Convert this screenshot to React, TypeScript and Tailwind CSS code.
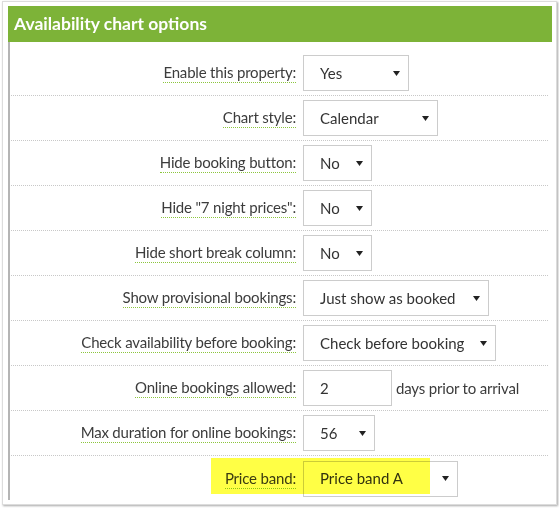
import React from "react";

type Row = {
  label: string;
  kind: "select" | "input";
  value: string;
  width: number;
  suffix?: string;
};

const rows: Row[] = [
  { label: "Enable this property:", kind: "select", value: "Yes", width: 106 },
  { label: "Chart style:", kind: "select", value: "Calendar", width: 135 },
  { label: "Hide booking button:", kind: "select", value: "No", width: 69 },
  { label: 'Hide "7 night prices":', kind: "select", value: "No", width: 69 },
  { label: "Hide short break column:", kind: "select", value: "No", width: 69 },
  { label: "Show provisional bookings:", kind: "select", value: "Just show as booked", width: 186 },
  { label: "Check availability before booking:", kind: "select", value: "Check before booking", width: 193 },
  { label: "Online bookings allowed:", kind: "input", value: "2", width: 89, suffix: "days prior to arrival" },
  { label: "Max duration for online bookings:", kind: "select", value: "56", width: 72 },
  { label: "Price band:", kind: "select", value: "Price band A", width: 155 },
];

function Arrow() {
  return (
    <svg width="7" height="5" viewBox="0 0 7 5" className="shrink-0">
      <path d="M0 0 H7 L3.5 5 Z" fill="#222" />
    </svg>
  );
}

export default function App() {
  const font = { fontFamily: "Lato, 'Open Sans', sans-serif" };
  return (
    <div className="w-[559px] h-[508px] bg-white overflow-hidden" style={font}>
      <div className="ml-[2px] mt-[1px] w-[555px] h-[504px] border border-[#dcdcdc] shadow-[1px_1px_2px_rgba(0,0,0,0.35)] pl-[5px] pt-[4px] bg-white">
        <div className="w-[544px]">
          <div className="h-[36px] bg-[#7db338] flex items-center pl-[6px]">
            <span className="text-white font-bold text-[17.5px]">Availability chart options</span>
          </div>
          <div className="relative border-l-2 border-[#b4b4b4] pt-[9px] h-[458px]">
            {rows.map((r, i) => (
              <div
                key={i}
                className={
                  "flex items-center h-[45px] ml-[1px] mr-[4px] " +
                  (i < rows.length - 1 ? "border-b border-dotted border-[#c8c8c8]" : "")
                }
              >
                <div className="w-[292px] flex justify-end pr-[7px]">
                  <span className="text-[15px] tracking-[-0.18px] text-[#3c3c3c] leading-[19px] border-b border-dotted border-[#8cc63e]">
                    {r.label}
                  </span>
                </div>
                {r.kind === "select" ? (
                  <div
                    className="h-[36px] border border-[#cccccc] bg-white flex items-center justify-between pl-[16px] pr-[8px]"
                    style={{ width: r.width }}
                  >
                    <span className="text-[15px] text-[#333]">{r.value}</span>
                    <Arrow />
                  </div>
                ) : (
                  <div className="flex items-center">
                    <div
                      className="h-[36px] border border-[#cccccc] bg-white flex items-center pl-[16px]"
                      style={{ width: r.width }}
                    >
                      <span className="text-[15px] text-[#333]">{r.value}</span>
                    </div>
                    <span className="ml-[4px] text-[15px] tracking-[-0.18px] text-[#3c3c3c]">{r.suffix}</span>
                  </div>
                )}
              </div>
            ))}
            <div className="absolute left-[201px] top-[416px] w-[219px] h-[36px] bg-[#ffff45] mix-blend-multiply pointer-events-none" />
          </div>
        </div>
      </div>
    </div>
  );
}
